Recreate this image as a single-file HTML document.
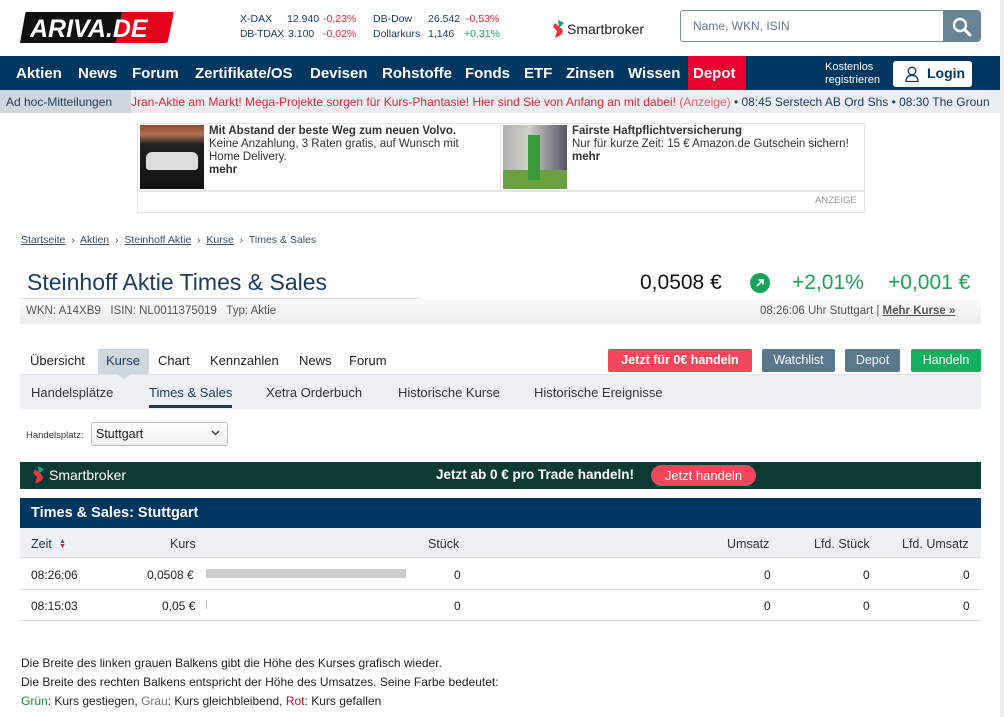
<!DOCTYPE html>
<html><head><meta charset="utf-8">
<style>
*{margin:0;padding:0;box-sizing:border-box}
body{width:1004px;height:717px;overflow:hidden;background:#fff;font-family:"Liberation Sans",Arial,sans-serif;color:#222;position:relative}
.a{position:absolute;white-space:nowrap}
.nav{position:absolute;left:0;top:56px;width:1000px;height:34px;background:#00365f}
.nav span{position:absolute;top:9px;color:#fff;font-weight:bold;font-size:15px}
.tk{font-size:10.5px;color:#1c3a5a}
.r{color:#e0263d}.g{color:#1ba25a}
.btn{position:absolute;top:349px;height:23px;color:#fff;font-size:12.5px;font-weight:bold;text-align:center;line-height:23px;border-radius:2px}
.th{position:absolute;top:537px;font-size:12.5px;color:#333}
.td{position:absolute;font-size:12px;color:#222}
</style></head><body>
<div style="position:absolute;right:0;top:0;width:4px;height:717px;background:#eee"></div>
<svg class="a" style="left:20px;top:12px" width="154" height="31" viewBox="0 0 154 31">
<path d="M6 0H102L96 31H0L5 3Q5.5 0 6 0Z" fill="#111"/>
<path d="M102 0H152Q154 0 153.5 2L148 29Q147.5 31 145 31H96Z" fill="#e2001a"/>
<text x="10" y="25" font-family="Liberation Sans" font-style="italic" font-weight="bold" font-size="25" fill="#fff">ARIVA.DE</text>
</svg>
<div class="a tk" style="left:240px;top:13px">X-DAX</div><div class="a tk" style="left:287px;top:13px">12.940</div><div class="a tk r" style="left:323px;top:13px">-0,23%</div>
<div class="a tk" style="left:373px;top:13px">DB-Dow</div><div class="a tk" style="left:428px;top:13px">26.542</div><div class="a tk r" style="left:466px;top:13px">-0,53%</div>
<div class="a tk" style="left:240px;top:28px;letter-spacing:-0.3px">DB-TDAX</div><div class="a tk" style="left:288px;top:28px">3.100</div><div class="a tk r" style="left:323px;top:28px">-0,02%</div>
<div class="a tk" style="left:373px;top:28px">Dollarkurs</div><div class="a tk" style="left:428px;top:28px">1,146</div><div class="a tk g" style="left:464px;top:28px">+0,31%</div>
<svg class="a" style="left:552px;top:20px" width="12" height="18" viewBox="0 0 12 18"><path d="M6 0L12 3L7 8Z" fill="#1aa385"/><path d="M3 3L10 9Q12 12 9 15L3 18L5 11L1 7Z" fill="#e8343f"/></svg>
<div class="a" style="left:567px;top:21px;font-size:14px;color:#222">Smartbroker</div>
<div class="a" style="left:680px;top:10px;width:264px;height:32px;border:1px solid #7c8e9c;border-right:none;border-radius:3px 0 0 3px"></div>
<div class="a" style="left:693px;top:19px;font-size:12px;color:#6b7b88">Name, WKN, ISIN</div>
<div class="a" style="left:943px;top:10px;width:38px;height:32px;background:#688497;border-radius:0 4px 4px 0"></div>
<svg class="a" style="left:952px;top:17px" width="20" height="20" viewBox="0 0 20 20"><circle cx="8" cy="8" r="6" stroke="#fff" stroke-width="2.4" fill="none"/><path d="M12.5 12.5L18 18" stroke="#fff" stroke-width="3" stroke-linecap="round"/></svg>
<div class="nav">
<span style="left:16px">Aktien</span><span style="left:78px">News</span><span style="left:132px">Forum</span><span style="left:195px">Zertifikate/OS</span><span style="left:310px">Devisen</span><span style="left:382px">Rohstoffe</span><span style="left:465px">Fonds</span><span style="left:524px">ETF</span><span style="left:566px">Zinsen</span><span style="left:628px">Wissen</span>
<div style="position:absolute;left:688px;top:0;width:58px;height:34px;background:#e8002f"></div><span style="left:693px">Depot</span>
<div style="position:absolute;left:825px;top:5px;color:#fff;font-size:11px;line-height:13px">Kostenlos<br>registrieren</div>
<div style="position:absolute;left:893px;top:5px;width:79px;height:26px;background:#fff;border-radius:3px"></div>
<svg style="position:absolute;left:905px;top:10px" width="14" height="16" viewBox="0 0 14 16"><circle cx="7" cy="5" r="3.8" stroke="#00365f" stroke-width="1.3" fill="none"/><path d="M1 15.5Q1 9.5 7 9.5Q13 9.5 13 15.5Z" stroke="#00365f" stroke-width="1.3" fill="none"/></svg>
<span style="left:927px;top:9px;color:#00365f;font-size:14px">Login</span>
</div>
<div class="a" style="left:0;top:90px;width:1000px;height:23px;background:#eaeef1"></div>
<div class="a" style="left:0;top:90px;width:131px;height:23px;background:#cfd8df"></div>
<div class="a" style="left:6px;top:95px;font-size:12px;color:#1c3a5a">Ad hoc-Mitteilungen</div>
<div class="a" style="left:131px;top:95px;font-size:12px;width:869px;overflow:hidden;color:#1c3a5a"><span style="color:#e0263d">Jran-Aktie am Markt! Mega-Projekte sorgen für Kurs-Phantasie! Hier sind Sie von Anfang an mit dabei!</span> <span style="color:#e86070">(Anzeige)</span> • 08:45 Serstech AB Ord Shs • 08:30 The Groun</div>
<div class="a" style="left:137px;top:123px;width:728px;height:90px;border:1px solid #e6e6e6"></div>
<div class="a" style="left:500px;top:124px;width:1px;height:66px;background:#e6e6e6"></div>
<div class="a" style="left:138px;top:190px;width:726px;height:2px;background:#e6e6e6"></div>
<div class="a" style="left:140px;top:125px;width:64px;height:64px;background:linear-gradient(#8a4a30 0,#b07050 15%,#222 30%,#111 100%)"></div>
<div class="a" style="left:146px;top:152px;width:52px;height:18px;background:#ddd;border-radius:6px 6px 3px 3px"></div>
<div class="a" style="left:503px;top:125px;width:64px;height:64px;background:linear-gradient(90deg,#b0b0b0 0,#d0d0c8 40%,#556 100%)"></div>
<div class="a" style="left:503px;top:170px;width:64px;height:19px;background:#6aa040"></div>
<div class="a" style="left:528px;top:135px;width:12px;height:45px;background:#3a9a3a"></div>
<div class="a" style="left:209px;top:125px;font-size:11.5px;line-height:13px;color:#333"><b>Mit Abstand der beste Weg zum neuen Volvo.</b><br>Keine Anzahlung, 3 Raten gratis, auf Wunsch mit<br>Home Delivery.<br><b>mehr</b></div>
<div class="a" style="left:572px;top:125px;font-size:11.5px;line-height:13px;color:#333"><b>Fairste Haftpflichtversicherung</b><br>Nur für kurze Zeit: 15 € Amazon.de Gutschein sichern!<br><b>mehr</b></div>
<div class="a" style="left:815px;top:195px;font-size:9.5px;color:#999">ANZEIGE</div>
<div class="a" style="left:21px;top:234px;font-size:10.5px;color:#3a5068"><u>Startseite</u> &nbsp;›&nbsp; <u>Aktien</u> &nbsp;›&nbsp; <u>Steinhoff Aktie</u> &nbsp;›&nbsp; <u>Kurse</u> &nbsp;›&nbsp; Times &amp; Sales</div>
<div class="a" style="left:27px;top:269px;font-size:23px;color:#1c3a5a">Steinhoff Aktie Times &amp; Sales</div>
<div class="a" style="left:20px;top:298px;width:401px;height:1px;background:#ddd"></div>
<div class="a" style="left:20px;top:300px;width:961px;height:24px;background:linear-gradient(#fafafa,#ececec)"></div>
<div class="a" style="left:26px;top:305px;font-size:11.5px;color:#555">WKN: A14XB9 &nbsp; ISIN: NL0011375019 &nbsp; Typ: Aktie</div>
<div class="a" style="left:760px;top:305px;font-size:11.5px;color:#555">08:26:06 Uhr Stuttgart | <b style="text-decoration:underline">Mehr Kurse »</b></div>
<div class="a" style="left:640px;top:271px;font-size:21px;color:#111">0,0508 €</div>
<div class="a" style="left:750px;top:273px;width:20px;height:20px;border-radius:50%;background:#15a45a"></div>
<svg class="a" style="left:755px;top:278px" width="10" height="10" viewBox="0 0 10 10"><path d="M2 8L8 2M3.5 2H8V6.5" stroke="#fff" stroke-width="1.6" fill="none"/></svg>
<div class="a g" style="left:792px;top:271px;font-size:21px">+2,01%</div>
<div class="a g" style="left:888px;top:271px;font-size:21px">+0,001 €</div>
<div class="a" style="left:98px;top:349px;width:51px;height:25px;background:#cfd8df"></div>
<div class="a" style="left:30px;top:353px;font-size:13px;color:#222">Übersicht</div>
<div class="a" style="left:106px;top:353px;font-size:13px;color:#1c3a5a">Kurse</div>
<div class="a" style="left:158px;top:353px;font-size:13px">Chart</div>
<div class="a" style="left:210px;top:353px;font-size:13px">Kennzahlen</div>
<div class="a" style="left:299px;top:353px;font-size:13px">News</div>
<div class="a" style="left:349px;top:353px;font-size:13px">Forum</div>
<div class="btn" style="left:608px;width:144px;background:#f0475a">Jetzt für 0€ handeln</div>
<div class="btn" style="left:762px;width:73px;background:#58788e;font-weight:normal">Watchlist</div>
<div class="btn" style="left:845px;width:55px;background:#58788e;font-weight:normal">Depot</div>
<div class="btn" style="left:911px;width:70px;background:#13b060;font-weight:normal">Handeln</div>
<div class="a" style="left:20px;top:374px;width:961px;height:35px;background:#eef1f4;border-top:1px solid #dfe4e8"></div>
<div class="a" style="left:118px;top:374px;border:6px solid transparent;border-top-color:#cfd8df"></div>
<div class="a" style="left:31px;top:385px;font-size:13px;color:#333">Handelsplätze</div>
<div class="a" style="left:149px;top:385px;font-size:13px;color:#1c3a5a">Times &amp; Sales</div>
<div class="a" style="left:149px;top:405px;width:83px;height:3px;background:#1c3a5a"></div>
<div class="a" style="left:266px;top:385px;font-size:13px;color:#333">Xetra Orderbuch</div>
<div class="a" style="left:398px;top:385px;font-size:13px;color:#333">Historische Kurse</div>
<div class="a" style="left:534px;top:385px;font-size:13px;color:#333">Historische Ereignisse</div>
<div class="a" style="left:26px;top:430px;font-size:9.5px;color:#333">Handelsplatz:</div>
<div class="a" style="left:91px;top:422px;width:137px;height:24px;border:1px solid #bbb;border-radius:3px;background:linear-gradient(#fff,#f0f0f0)"></div>
<div class="a" style="left:96px;top:427px;font-size:12.5px">Stuttgart</div>
<svg class="a" style="left:211px;top:430px" width="9" height="6" viewBox="0 0 9 6"><path d="M1 1L4.5 4.5L8 1" stroke="#333" stroke-width="1.3" fill="none"/></svg>
<div class="a" style="left:20px;top:462px;width:961px;height:27px;background:#0e3a34"></div>
<svg class="a" style="left:32px;top:466px" width="12" height="18" viewBox="0 0 12 18"><path d="M6 0L12 3L7 8Z" fill="#1aa385"/><path d="M3 3L10 9Q12 12 9 15L3 18L5 11L1 7Z" fill="#e8343f"/></svg>
<div class="a" style="left:49px;top:467px;font-size:14px;color:#fff">Smartbroker</div>
<div class="a" style="left:436px;top:467px;font-size:13.5px;color:#fff;font-weight:bold">Jetzt ab 0 € pro Trade handeln!</div>
<div class="a" style="left:651px;top:465px;width:105px;height:21px;border-radius:11px;background:#f0475a;color:#fff;font-size:13px;text-align:center;line-height:21px">Jetzt handeln</div>
<div class="a" style="left:20px;top:498px;width:961px;height:30px;background:#00365f"></div>
<div class="a" style="left:31px;top:505px;font-size:14.5px;color:#fff;font-weight:bold">Times &amp; Sales: Stuttgart</div>
<div class="a" style="left:20px;top:528px;width:961px;height:30px;background:#eef1f4;border-bottom:1px solid #d5dbe0"></div>
<div class="th" style="left:31px;color:#1c3a5a">Zeit</div>
<div class="a" style="left:59px;top:539px;font-size:7px;line-height:5px;color:#555">▲<br><span style="color:#e0263d">▼</span></div>
<div class="th" style="left:170px">Kurs</div>
<div class="th" style="left:428px">Stück</div>
<div class="th" style="left:727px">Umsatz</div>
<div class="th" style="left:814px">Lfd. Stück</div>
<div class="th" style="left:902px">Lfd. Umsatz</div>
<div class="a" style="left:20px;top:589px;width:961px;height:1px;background:#d5dbe0"></div>
<div class="a" style="left:20px;top:620px;width:961px;height:1px;background:#d5dbe0"></div>
<div class="td" style="left:31px;top:568px">08:26:06</div>
<div class="td" style="left:147px;top:568px">0,0508 €</div>
<div class="a" style="left:206px;top:569px;width:200px;height:9px;background:#ccc"></div>
<div class="td" style="left:454px;top:568px">0</div><div class="td" style="left:764px;top:568px">0</div><div class="td" style="left:863px;top:568px">0</div><div class="td" style="left:963px;top:568px">0</div>
<div class="td" style="left:31px;top:599px">08:15:03</div>
<div class="td" style="left:162px;top:599px">0,05 €</div>
<div class="a" style="left:206px;top:600px;width:1px;height:9px;background:#bbb"></div>
<div class="td" style="left:454px;top:599px">0</div><div class="td" style="left:764px;top:599px">0</div><div class="td" style="left:863px;top:599px">0</div><div class="td" style="left:963px;top:599px">0</div>
<div class="a" style="left:21px;top:654px;font-size:12px;line-height:19px;color:#222">Die Breite des linken grauen Balkens gibt die Höhe des Kurses grafisch wieder.<br>Die Breite des rechten Balkens entspricht der Höhe des Umsatzes. Seine Farbe bedeutet:<br><span style="color:#1a8a3a">Grün</span>: Kurs gestiegen, <span style="color:#777">Grau</span>: Kurs gleichbleibend, <span style="color:#c0102a">Rot</span>: Kurs gefallen</div>
</body></html>
